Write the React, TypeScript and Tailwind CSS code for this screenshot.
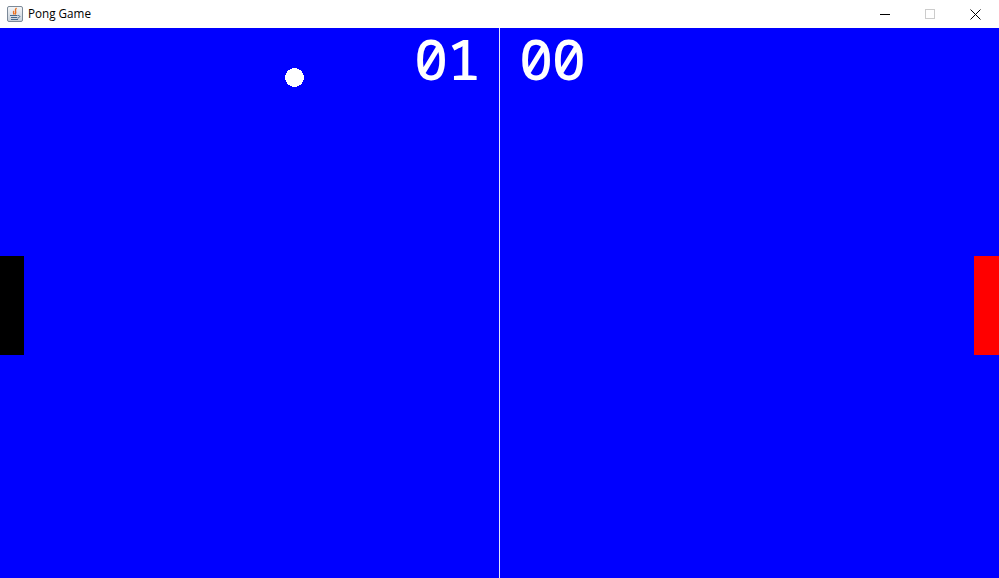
import React from 'react';

const App: React.FC = () => {
  return (
    <div className="w-[999px] h-[578px] flex flex-col overflow-hidden font-['Open_Sans',sans-serif]">
      {/* title bar */}
      <div className="h-7 bg-white flex items-center shrink-0">
        <svg className="ml-[7px] mr-[5px]" width="16" height="16" viewBox="0 0 16 16">
          <defs>
            <linearGradient id="java-bg" x1="0" y1="0" x2="0" y2="1">
              <stop offset="0" stopColor="#f6f7f9" />
              <stop offset="1" stopColor="#c6d0da" />
            </linearGradient>
          </defs>
          <rect x="0.5" y="0.5" width="15" height="15" rx="1.5" fill="url(#java-bg)" stroke="#7c8a99" />
          <path d="M9.5 2C6.5 4.5 10.5 5.5 8 8.5M7 5C5.5 6.5 7.5 7 6.5 8.5" fill="none" stroke="#e8701f" strokeWidth="1.4" />
          <path d="M3 9.5H10.5M4 11.5H10M4 13.5H11M11 9.5C13.5 9.5 13.5 11.5 10.5 12" fill="none" stroke="#44688c" strokeWidth="1" />
        </svg>
        <span className="text-[11.7px] text-black leading-none">Pong Game</span>
        <div className="ml-auto flex items-center h-full">
          <div className="w-[46px] h-full flex items-center justify-center">
            <svg width="10" height="10" viewBox="0 0 10 10" shapeRendering="crispEdges"><path d="M0 5.5H10" stroke="#000" /></svg>
          </div>
          <div className="w-[44px] h-full flex items-center justify-center">
            <svg width="10" height="10" viewBox="0 0 10 10" shapeRendering="crispEdges"><rect x="0.5" y="0.5" width="9" height="9" fill="none" stroke="#cccccc" /></svg>
          </div>
          <div className="w-[47px] h-full flex items-center justify-center">
            <svg width="11" height="11" viewBox="0 0 11 11"><path d="M0.5 0.5L10.5 10.5M10.5 0.5L0.5 10.5" stroke="#000" strokeWidth="1" /></svg>
          </div>
        </div>
      </div>

      {/* playfield */}
      <div className="relative flex-1 bg-[#0000ff]">
        <div className="absolute left-[499px] top-0 bottom-0 w-px bg-[#dfe3ff]" />
        <svg className="absolute left-[285px] top-[40px]" width="19" height="19" viewBox="0 0 19 19" shapeRendering="crispEdges">
          <circle cx="9.5" cy="9.5" r="9.5" fill="#fff" />
        </svg>
        <div className="absolute left-0 top-[228px] w-[24px] h-[99px] bg-black" />
        <div className="absolute right-0 top-[228px] w-[25px] h-[99px] bg-[#ff0000]" />
        <div className="absolute left-[414px] top-0 text-[57px] leading-[61px] tracking-[-1.5px] font-medium text-white font-['Noto_Sans_Mono',monospace]">01</div>
        <div className="absolute left-[519px] top-0 text-[57px] leading-[61px] tracking-[-1.5px] font-medium text-white font-['Noto_Sans_Mono',monospace]">00</div>
      </div>
    </div>
  );
};

export default App;
